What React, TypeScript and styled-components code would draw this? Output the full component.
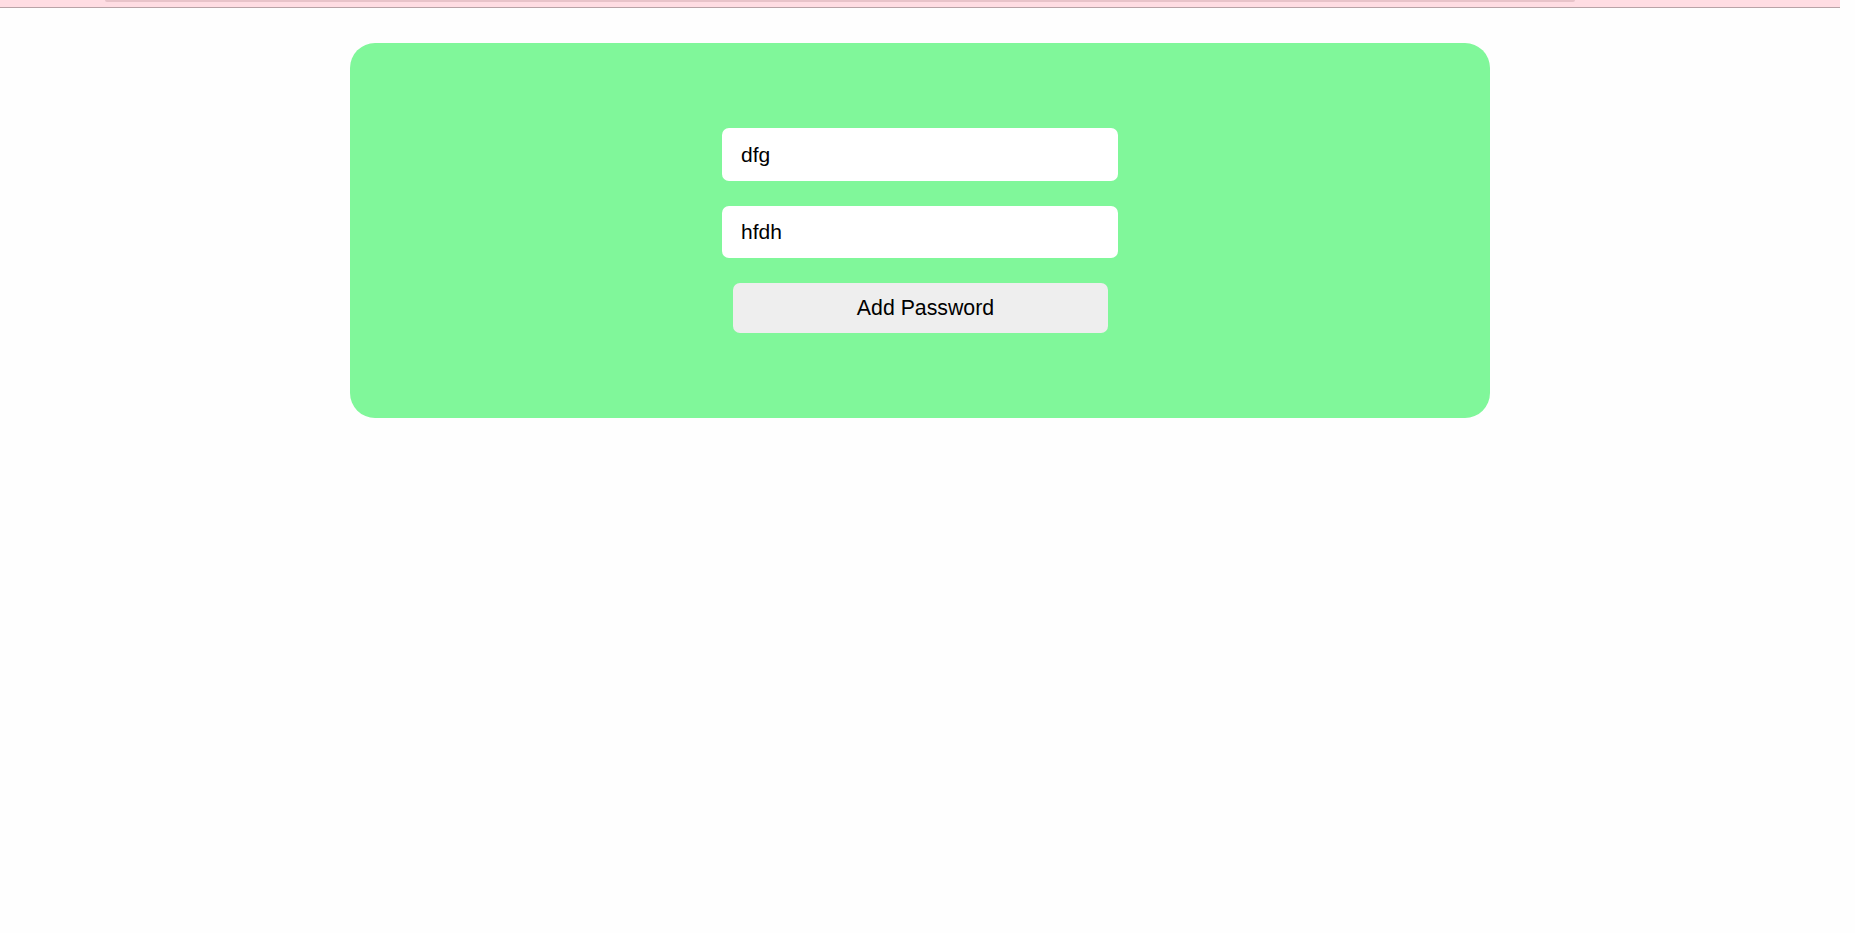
import React, { useState } from "react";
import styled, { createGlobalStyle } from "styled-components";

const Global = createGlobalStyle`
  html, body { margin: 0; padding: 0; background: #fefefe; }
  body { font-family: "Liberation Sans", Arial, sans-serif; }
  * { box-sizing: border-box; }
`;

const Page = styled.div`
  width: 1840px;
  min-height: 933px;
`;

const TopBar = styled.header`
  height: 8px;
  background: #ffdde3;
  border-bottom: 1px solid #b9a3a7;
  padding-left: 105px;
  display: flex;
  align-items: flex-start;
`;

const TopPill = styled.div`
  width: 1470px;
  height: 2px;
  background: #e8c3c9;
  border-radius: 0 0 6px 6px;
`;

const Card = styled.section`
  width: 1140px;
  margin: 35px auto 0;
  background: #80f79a;
  border-radius: 25px;
  padding: 85px 0 85px;
  display: flex;
  flex-direction: column;
  align-items: center;
`;

const Form = styled.form`
  display: flex;
  flex-direction: column;
  align-items: center;
  width: 396px;
`;

const Input = styled.input<{ $h?: number }>`
  width: 396px;
  height: ${(p) => p.$h ?? 53}px;
  border: none;
  outline: none;
  border-radius: 7px;
  background: #ffffff;
  padding: 0 19px;
  font-family: "Liberation Sans", Arial, sans-serif;
  font-size: 21px;
  color: #000;
  margin-bottom: 25px;
`;

const Button = styled.button`
  width: 375px;
  height: 50px;
  border: none;
  border-radius: 7px;
  background: #eeeeee;
  padding: 0 0 0 10px;
  font-family: "Liberation Sans", Arial, sans-serif;
  font-size: 21.3px;
  color: #000;
  cursor: pointer;
  margin-left: 1px;
`;

export default function App() {
  const [site, setSite] = useState("dfg");
  const [pw, setPw] = useState("hfdh");
  return (
    <Page>
      <Global />
      <TopBar>
        <TopPill />
      </TopBar>
      <Card>
        <Form onSubmit={(e) => e.preventDefault()}>
          <Input $h={53} value={site} onChange={(e) => setSite(e.target.value)} />
          <Input $h={52} value={pw} onChange={(e) => setPw(e.target.value)} />
          <Button type="submit">Add Password</Button>
        </Form>
      </Card>
    </Page>
  );
}
